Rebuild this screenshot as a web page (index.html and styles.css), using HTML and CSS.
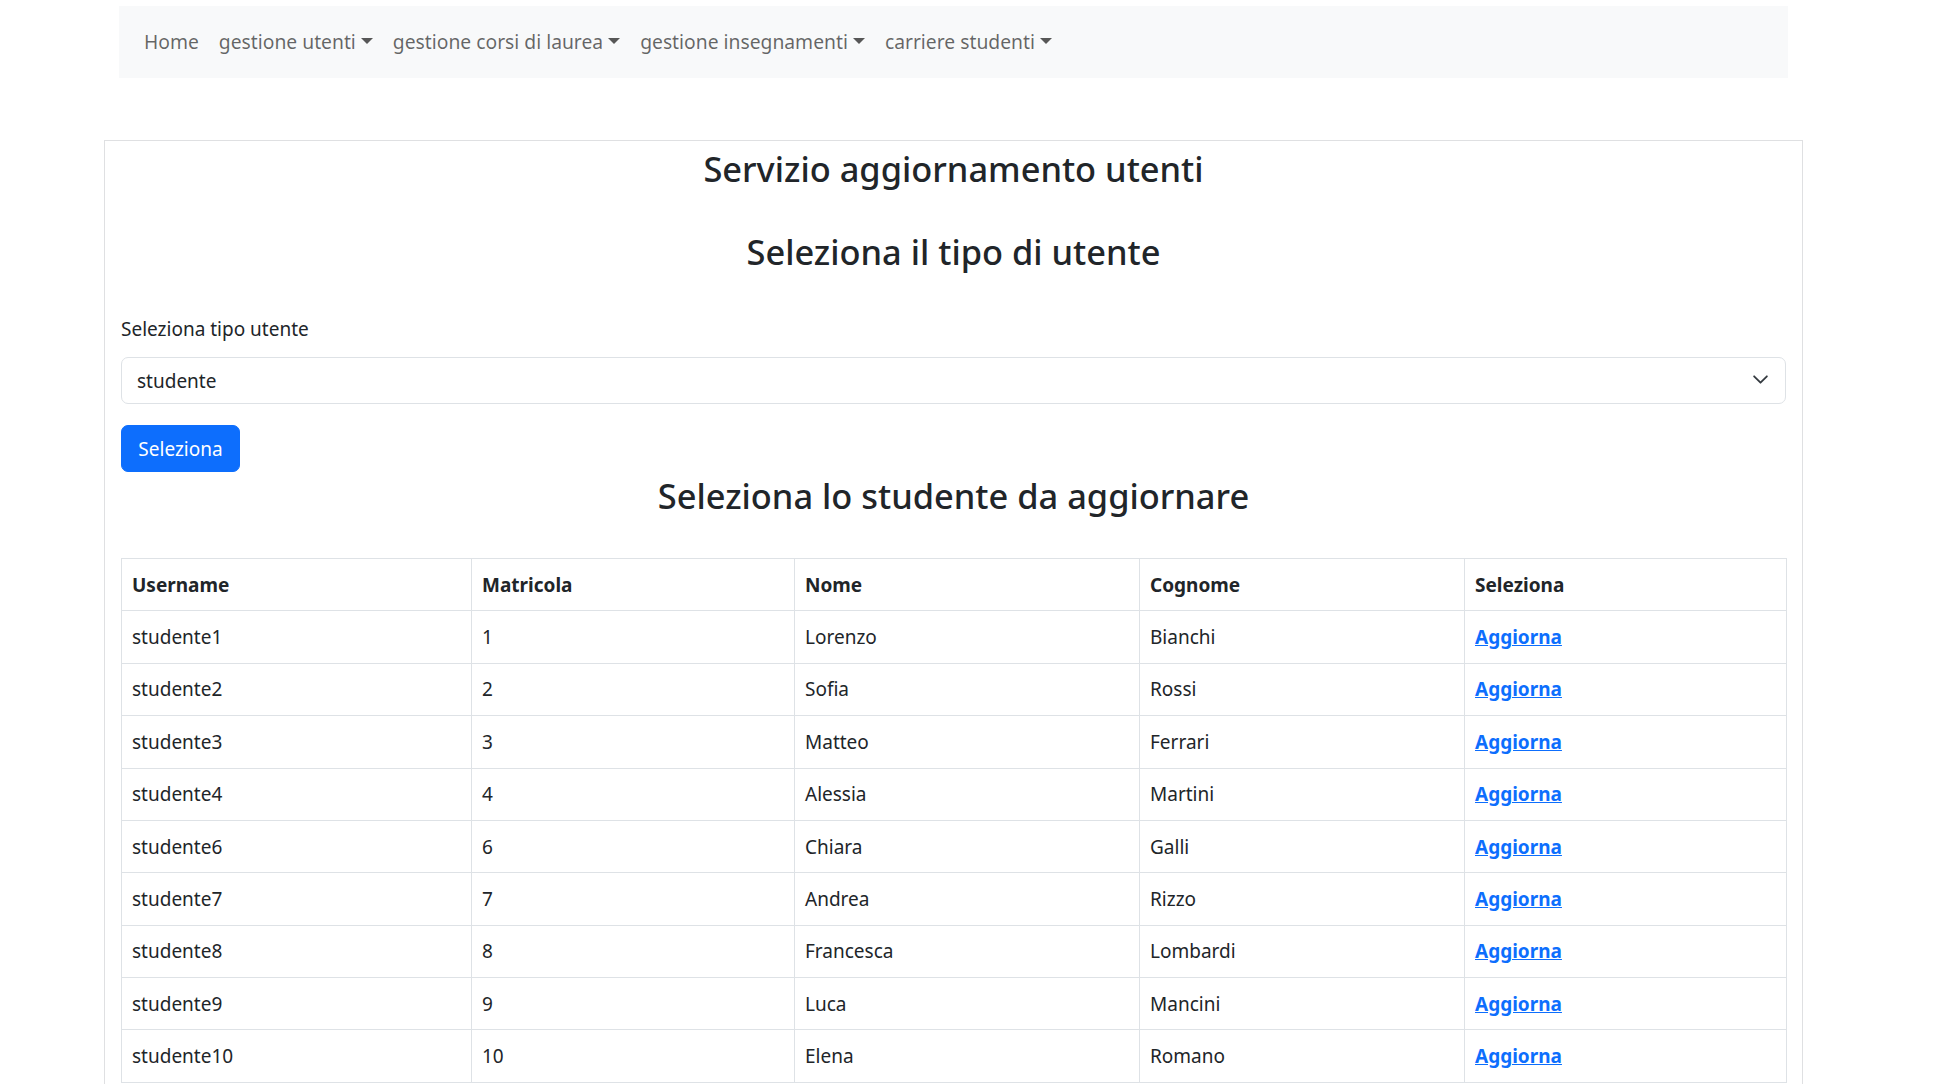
FILE: index.html
```html
<!DOCTYPE html>
<html lang="it">
<head>
<meta charset="utf-8">
<title>Servizio aggiornamento utenti</title>
<link rel="stylesheet" href="styles.css">
</head>
<body>
<nav class="navbar">
  <ul class="nav">
    <li><a class="nav-link" href="#">Home</a></li>
    <li><a class="nav-link dropdown" href="#">gestione utenti</a></li>
    <li><a class="nav-link dropdown" href="#">gestione corsi di laurea</a></li>
    <li><a class="nav-link dropdown" href="#">gestione insegnamenti</a></li>
    <li><a class="nav-link dropdown" href="#">carriere studenti</a></li>
  </ul>
</nav>
<main class="card">
  <h3 class="heading">Servizio aggiornamento utenti</h3>
  <h3 class="heading heading-gap">Seleziona il tipo di utente</h3>
  <form class="form">
    <label class="form-label" for="tipo">Seleziona tipo utente</label>
    <div class="select-wrap">
      <select id="tipo" class="form-select">
        <option>studente</option>
        <option>docente</option>
        <option>segreteria</option>
      </select>
      <svg class="chevron" viewBox="0 0 16 16" width="17" height="17" aria-hidden="true"><path fill="none" stroke="#343a40" stroke-linecap="round" stroke-linejoin="round" stroke-width="1.7" d="m2 5 6 6 6-6"/></svg>
    </div>
    <button class="btn" type="button">Seleziona</button>
  </form>
  <h3 class="heading heading-table">Seleziona lo studente da aggiornare</h3>
  <table class="table">
    <colgroup>
      <col class="c1"><col class="c2"><col class="c3"><col class="c4"><col class="c5">
    </colgroup>
    <thead>
      <tr><th>Username</th><th>Matricola</th><th>Nome</th><th>Cognome</th><th>Seleziona</th></tr>
    </thead>
    <tbody>
      <tr><td>studente1</td><td>1</td><td>Lorenzo</td><td>Bianchi</td><td><a href="#">Aggiorna</a></td></tr>
      <tr><td>studente2</td><td>2</td><td>Sofia</td><td>Rossi</td><td><a href="#">Aggiorna</a></td></tr>
      <tr><td>studente3</td><td>3</td><td>Matteo</td><td>Ferrari</td><td><a href="#">Aggiorna</a></td></tr>
      <tr><td>studente4</td><td>4</td><td>Alessia</td><td>Martini</td><td><a href="#">Aggiorna</a></td></tr>
      <tr><td>studente6</td><td>6</td><td>Chiara</td><td>Galli</td><td><a href="#">Aggiorna</a></td></tr>
      <tr><td>studente7</td><td>7</td><td>Andrea</td><td>Rizzo</td><td><a href="#">Aggiorna</a></td></tr>
      <tr><td>studente8</td><td>8</td><td>Francesca</td><td>Lombardi</td><td><a href="#">Aggiorna</a></td></tr>
      <tr><td>studente9</td><td>9</td><td>Luca</td><td>Mancini</td><td><a href="#">Aggiorna</a></td></tr>
      <tr><td>studente10</td><td>10</td><td>Elena</td><td>Romano</td><td><a href="#">Aggiorna</a></td></tr>
    </tbody>
  </table>
</main>
</body>
</html>
```

FILE: styles.css
```css
html, body {
  margin: 0;
  padding: 0;
  background: #fff;
}

body {
  font-family: "Noto Sans", "Open Sans", "Liberation Sans", sans-serif;
  font-size: 19px;
  line-height: 30px;
  color: #212529;
  overflow: hidden;
}

.navbar {
  box-sizing: border-box;
  margin: 6px 0 0 119px;
  width: 1669px;
  height: 72px;
  background: #f8f9fa;
  padding: 10px 15px;
  display: flex;
  align-items: center;
}

.nav {
  list-style: none;
  margin: 0;
  padding: 0;
  display: flex;
  align-items: center;
}

.nav-link {
  display: block;
  padding: 11px 10px;
  font-size: 19.3px;
  color: rgba(0, 0, 0, 0.6);
  text-decoration: none;
  line-height: 30px;
}

.dropdown::after {
  content: "";
  display: inline-block;
  margin-left: 5px;
  vertical-align: 5px;
  border-top: 6px solid rgba(0, 0, 0, 0.65);
  border-right: 6px solid transparent;
  border-left: 6px solid transparent;
  border-bottom: 0;
}

.card {
  box-sizing: border-box;
  display: block;
  margin: 62px 0 0 104px;
  width: 1699px;
  border: 1px solid #dfe0e2;
  padding: 7px 16px 40px;
}

.heading {
  margin: 0;
  text-align: center;
  font-size: 34.4px;
  line-height: 42px;
  font-weight: 500;
  color: #212529;
}

.heading-gap {
  margin-top: 41px;
}

.form {
  margin: 41px 0 0;
}

.form-label {
  display: block;
  line-height: 30px;
}

.select-wrap {
  position: relative;
  margin-top: 13px;
}

.form-select {
  display: block;
  box-sizing: border-box;
  width: 100%;
  height: 47px;
  padding: 0 50px 0 15px;
  font: inherit;
  color: #212529;
  background: #fff;
  border: 1px solid #dee2e6;
  border-radius: 7px;
  appearance: none;
  -webkit-appearance: none;
  outline: none;
}

.chevron {
  position: absolute;
  right: 17px;
  top: 14px;
  pointer-events: none;
}

.btn {
  display: block;
  box-sizing: border-box;
  margin-top: 21px;
  width: 119px;
  height: 47px;
  padding: 0;
  font: inherit;
  color: #fff;
  background: #0d6efd;
  border: 1px solid #0d6efd;
  border-radius: 7px;
}

.heading-table {
  margin-top: 3px;
}

.table {
  margin-top: 41px;
  width: 1665px;
  table-layout: fixed;
  border-collapse: collapse;
}

.c1 { width: 350px; }
.c2 { width: 323px; }
.c3 { width: 345px; }
.c4 { width: 325px; }
.c5 { width: 322px; }

.table th,
.table td {
  border: 1px solid #dee2e6;
  padding: 10.7px 10px;
  line-height: 30px;
  text-align: left;
  vertical-align: middle;
}

.table th {
  font-weight: 700;
}

.table a {
  color: #0d6efd;
  font-weight: 700;
  text-decoration: underline;
}
```
